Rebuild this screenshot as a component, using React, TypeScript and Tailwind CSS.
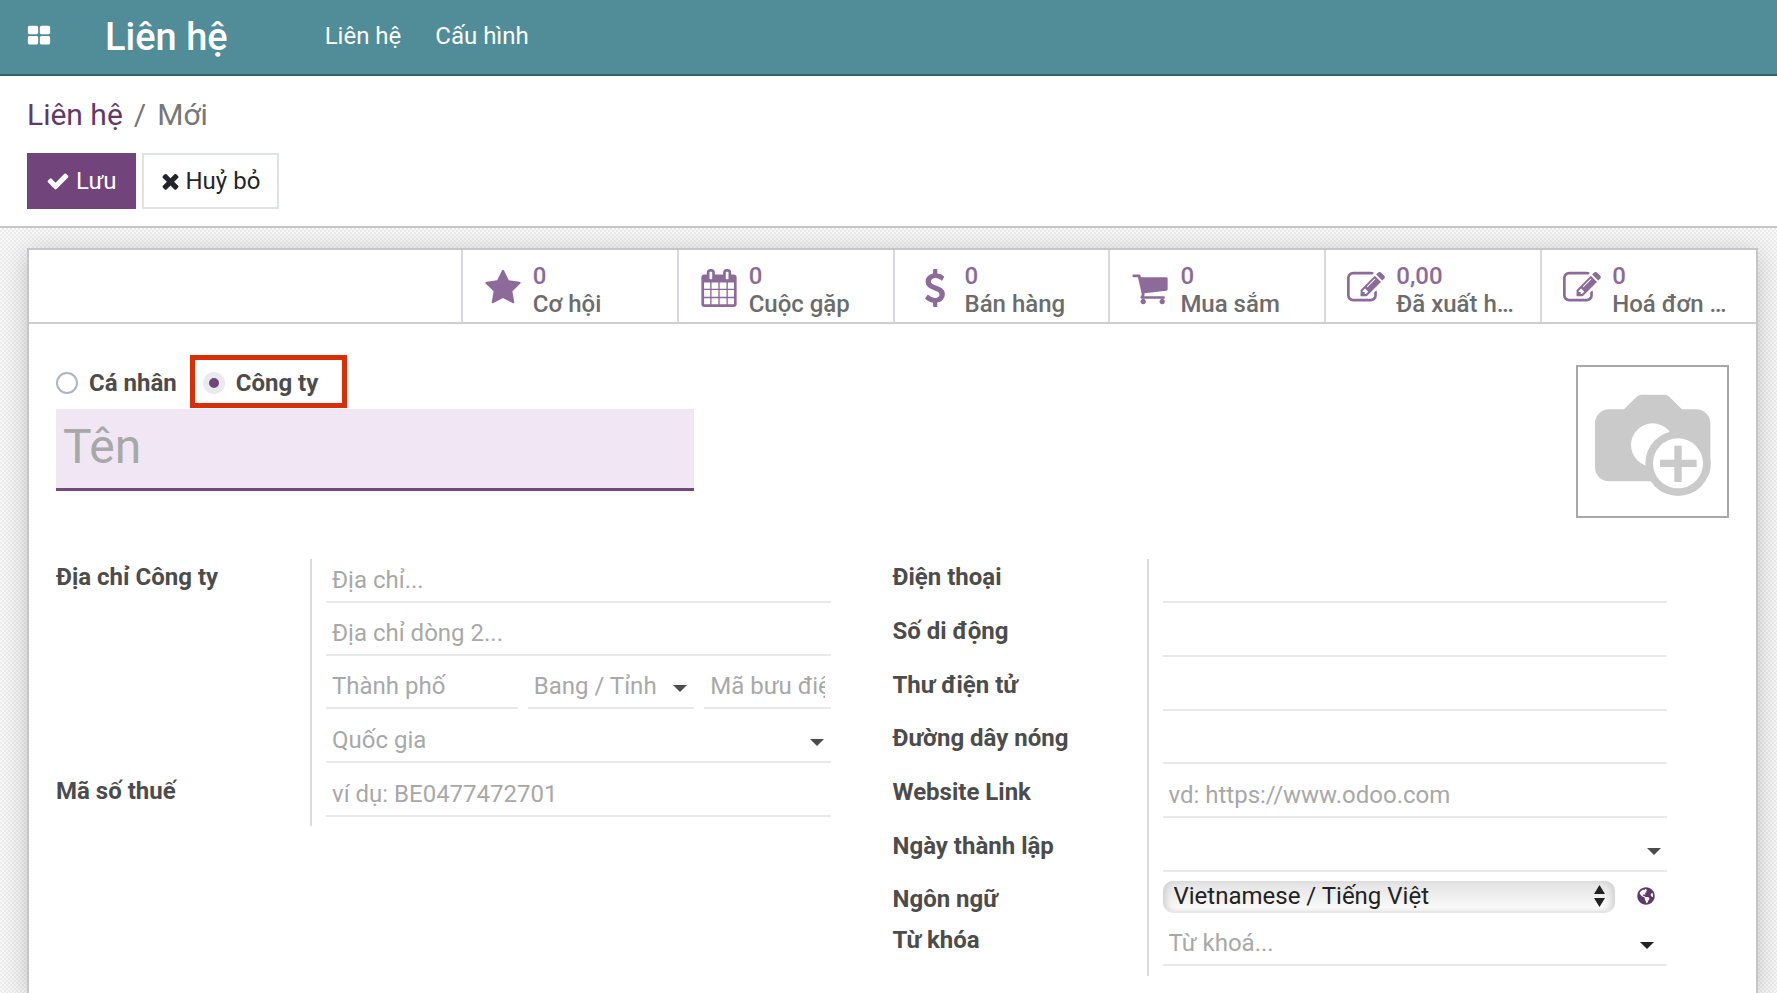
import React from 'react';
import { FaGlobeAmericas } from 'react-icons/fa';
import clsx from 'clsx';

const icons = {
  apps: 'M832 1024v384q0 52-38 90t-90 38h-512q-52 0-90-38t-38-90v-384q0-52 38-90t90-38h512q52 0 90 38t38 90zm0-768v384q0 52-38 90t-90 38h-512q-52 0-90-38t-38-90v-384q0-52 38-90t90-38h512q52 0 90 38t38 90zm896 768v384q0 52-38 90t-90 38h-512q-52 0-90-38t-38-90v-384q0-52 38-90t90-38h512q52 0 90 38t38 90zm0-768v384q0 52-38 90t-90 38h-512q-52 0-90-38t-38-90v-384q0-52 38-90t90-38h512q52 0 90 38t38 90z',
  check: 'M1671 566q0 40-28 68l-724 724-136 136q-28 28-68 28t-68-28l-136-136-362-362q-28-28-28-68t28-68l136-136q28-28 68-28t68 28l294 295 656-657q28-28 68-28t68 28l136 136q28 28 28 68z',
  times: 'M1490 1322q0 40-28 68l-136 136q-28 28-68 28t-68-28l-294-294-294 294q-28 28-68 28t-68-28l-136-136q-28-28-28-68t28-68l294-294-294-294q-28-28-28-68t28-68l136-136q28-28 68-28t68 28l294 294 294-294q28-28 68-28t68 28l136 136q28 28 28 68t-28 68l-294 294 294 294q28 28 28 68z',
  star: 'M1728 647q0 22-26 48l-363 354 86 500q1 7 1 20 0 21-10.5 35.5t-30.5 14.5q-19 0-40-12l-449-236-449 236q-22 12-40 12-21 0-31.5-14.5t-10.5-35.5q0-6 2-20l86-500-364-354q-25-27-25-48 0-37 56-46l502-73 225-455q19-41 49-41t49 41l225 455 502 73q56 9 56 46z',
  calendar: 'M192 1664h288v-288h-288v288zm352 0h320v-288h-320v288zm-352-352h288v-320h-288v320zm352 0h320v-320h-320v320zm-352-384h288v-288h-288v288zm736 736h320v-288h-320v288zm-384-736h320v-288h-320v288zm768 736h288v-288h-288v288zm-384-352h320v-320h-320v320zm-352-864v-288q0-13-9.5-22.5t-22.5-9.5h-64q-13 0-22.5 9.5t-9.5 22.5v288q0 13 9.500 22.500t22.500 9.500h64q13 0 22.500-9.500t9.500-22.500zm736 864h288v-320h-288v320zm-384-384h320v-288h-320v288zm384 0h288v-288h-288v288zm32-480v-288q0-13-9.500-22.500t-22.500-9.500h-64q-13 0-22.500 9.500t-9.500 22.500v288q0 13 9.500 22.500t22.500 9.500h64q13 0 22.500-9.500t9.500-22.500zm384-64v1280q0 52-38 90t-90 38h-1408q-52 0-90-38t-38-90v-1280q0-52 38-90t90-38h128v-96q0-66 47-113t113-47h64q66 0 113 47t47 113v96h384v-96q0-66 47-113t113-47h64q66 0 113 47t47 113v96h128q52 0 90 38t38 90z',
  dollar: 'M1362 1185q0 153-99.5 263.5t-258.5 136.5v175q0 14-9 23t-23 9h-135q-13 0-22.5-9.5t-9.5-22.5v-175q-66-9-127.5-31t-101.5-44.5-74-48-46.5-37.5-17.5-18q-17-21-2-41l103-135q7-10 23-12 15-2 24 9l2 2q113 99 243 125 37 8 74 8 81 0 142.5-43t61.5-122q0-28-15-53t-33.5-42-58.5-37.5-66-32-80-32.5q-39-16-61.5-25t-61.5-26.5-62.5-31-56.5-35.5-53.5-42.5-43.5-49-35.5-58-21-66.5-8.5-78q0-138 98-242t255-134v-180q0-13 9.5-22.5t22.5-9.5h135q14 0 23 9t9 23v176q57 6 110.5 23t87 33.5 63.5 37.5 39 29 15 14q17 18 5 38l-81 146q-8 15-23 16-14 3-27-7-3-3-14.5-12t-39-26.5-58.5-32-74.5-26-85.5-11.5q-95 0-155 43t-60 111q0 26 8.5 48t29.5 41.5 39.5 33 56 31 60.5 27 70 27.5q53 20 81 31.5t76 35 75.5 42.5 62 50 53 63.5 31.5 76.5 13 94z',
  cart: 'M704 1536q0 52-38 90t-90 38-90-38-38-90 38-90 90-38 90 38 38 90zm896 0q0 52-38 90t-90 38-90-38-38-90 38-90 90-38 90 38 38 90zm128-1088v512q0 24-16.5 42.5t-40.5 21.5l-1044 122q13 60 13 70 0 16-24 64h920q26 0 45 19t19 45-19 45-45 19h-1024q-26 0-45-19t-19-45q0-11 8-31.5t16-36 21.5-40 15.5-29.5l-177-823h-204q-26 0-45-19t-19-45 19-45 45-19h256q16 0 28.5 6.5t19.5 15.5 13 24.5 8 26 5.5 29.5 4.5 26h1201q26 0 45 19t19 45z',
  edit: 'M888 1184l116-116-152-152-116 116v56h96v96h56zm440-720q-16-16-33 1l-350 350q-17 17-1 33t33-1l350-350q17-17 1-33zm80 594v190q0 119-84.5 203.5t-203.5 84.5h-832q-119 0-203.5-84.5t-84.5-203.5v-832q0-119 84.5-203.5t203.5-84.5h832q63 0 117 25 15 7 18 23 3 17-9 29l-49 49q-14 14-32 8-23-6-45-6h-832q-66 0-113 47t-47 113v832q0 66 47 113t113 47h832q66 0 113-47t47-113v-126q0-13 9-22l64-64q15-15 35-7t20 29zm-96-738l288 288-672 672h-288v-288zm444 132l-92 92-288-288 92-92q28-28 68-28t68 28l152 152q28 28 28 68t-28 68z',
};

type IconName = keyof typeof icons;

interface IconProps {
  name: IconName;
  className?: string;
  viewBox?: string;
}

function Icon({ name, className, viewBox = '0 0 1792 1792' }: IconProps) {
  return (
    <svg className={clsx('shrink-0', className)} viewBox={viewBox} fill="currentColor" aria-hidden="true">
      <path d={icons[name]} />
    </svg>
  );
}

function Caret({ className }: { className: string }) {
  return (
    <svg
      className={clsx('pointer-events-none absolute top-5 h-[7px] w-[14px]', className)}
      viewBox="0 0 14 7"
      fill="currentColor"
      aria-hidden="true"
    >
      <path d="M0 0h14L7 7z" />
    </svg>
  );
}

const stats: { icon: IconName; value: string; label: string }[] = [
  { icon: 'star', value: '0', label: 'Cơ hội' },
  { icon: 'calendar', value: '0', label: 'Cuộc gặp' },
  { icon: 'dollar', value: '0', label: 'Bán hàng' },
  { icon: 'cart', value: '0', label: 'Mua sắm' },
  { icon: 'edit', value: '0,00', label: 'Đã xuất hoá đơn' },
  { icon: 'edit', value: '0', label: 'Hoá đơn mua hàng' },
];

const fieldClass =
  'block h-11 w-full min-w-0 appearance-none rounded-none border-b-2 border-[#e8e9ea] bg-transparent px-[6px] placeholder:text-[#a8a8a8] focus:outline-none';

const radioClass =
  'size-[22px] shrink-0 appearance-none rounded-full border-2 border-[#adb5bd] bg-white checked:border-[6px] checked:border-[#e9e9ee] checked:bg-[#71447b]';

function Row({ id, label, children }: { id: string; label: string; children: React.ReactNode }) {
  return (
    <div className="flex">
      <label htmlFor={id} className="w-[254px] shrink-0 leading-9 font-bold text-[#4c4c4c]">
        {label}
      </label>
      <div className="min-w-0 flex-1 border-l-2 border-[#dcdcdc] pl-[14px]">{children}</div>
    </div>
  );
}

interface FieldProps {
  id: string;
  placeholder?: string;
  label?: string;
  compact?: boolean;
}

function Field({ id, placeholder, label, compact = false }: FieldProps) {
  return (
    <div className={compact ? 'h-[53px]' : 'h-[54px]'}>
      <input id={id} type="text" placeholder={placeholder} aria-label={label} className={fieldClass} />
    </div>
  );
}

function SelectField({ id, placeholder }: { id: string; placeholder: string }) {
  return (
    <div className="relative h-[54px]">
      <select id={id} aria-label={placeholder} className={clsx(fieldClass, 'text-[#a8a8a8]')}>
        <option>{placeholder}</option>
      </select>
      <Caret className="right-[7px] text-[#4c4c4c]" />
    </div>
  );
}

function Navbar() {
  return (
    <header className="flex h-[76px] items-center border-b-2 border-[#35616c] bg-[#518c99] pl-[27px] text-white">
      <button type="button" aria-label="Ứng dụng" className="pb-[2px]">
        <Icon name="apps" className="size-6" />
      </button>
      <a href="#" className="ml-[54px] text-[38px] leading-none font-medium">
        Liên hệ
      </a>
      <nav className="ml-[97px] flex gap-[34px] pb-[2px]">
        <a href="#">Liên hệ</a>
        <a href="#">Cấu hình</a>
      </nav>
    </header>
  );
}

function ControlPanel() {
  return (
    <div className="border-b-2 border-[#c6c6c6] bg-white px-[27px] pt-[17px] pb-[17px]">
      <ol className="flex text-[30px] leading-[44px]">
        <li>
          <a href="#" className="text-[#5f3a69]">
            Liên hệ
          </a>
        </li>
        <li className="text-[#777777] before:px-[11px] before:content-['/']">Mới</li>
      </ol>
      <div className="mt-4 flex gap-[6px]">
        <button
          type="button"
          className="flex h-14 items-center gap-[6px] border-2 border-[#71447b] bg-[#71447b] px-[17px] text-white"
        >
          <Icon name="check" className="size-6" />
          Lưu
        </button>
        <button
          type="button"
          className="flex h-14 items-center gap-[6px] border-2 border-[#dee2e2] bg-white px-[17px] text-[#212529]"
        >
          <Icon name="times" className="h-6 w-[19px]" viewBox="192 0 1408 1792" />
          Huỷ bỏ
        </button>
      </div>
    </div>
  );
}

function StatButtons() {
  return (
    <div className="flex justify-end border-b-2 border-[#cdced2]">
      {stats.map((stat) => (
        <button
          key={stat.label}
          type="button"
          className="flex h-[72px] w-1/8 items-center gap-[11px] border-l-2 border-[#d8d9de] pt-1 pr-6 pl-[21px] text-left font-medium"
        >
          <Icon name={stat.icon} className="size-[38px] text-[#8c6a99]" />
          <span className="min-w-0 pt-1 leading-7">
            <span className="block text-[#8c6a99]">{stat.value}</span>
            <span className="block truncate text-[#6c6c6c]">{stat.label}</span>
          </span>
        </button>
      ))}
    </div>
  );
}

function PhotoButton() {
  return (
    <button type="button" aria-label="Tải ảnh lên" className="mt-[10px] size-[153px] border-2 border-[#a8a8a8]">
      <svg viewBox="0 0 447 447" fill="#cacaca" aria-hidden="true">
        <rect x="51" y="127" width="346" height="216" rx="42" />
        <path d="M136 129l40-40q6-6 14-6h70q8 0 14 6l40 40z" />
        <circle cx="224" cy="234" r="65" fill="#fff" />
        <circle cx="300" cy="289" r="98" />
        <circle cx="300" cy="289" r="75" fill="#fff" />
        <path d="M289 236h22v42h45v22h-45v45h-22v-45h-43v-22h43z" />
      </svg>
    </button>
  );
}

function AddressGroup() {
  return (
    <div className="pr-[62px]">
      <Row id="street" label="Địa chỉ Công ty">
        <Field id="street" placeholder="Địa chỉ..." compact />
        <Field id="street2" placeholder="Địa chỉ dòng 2..." label="Địa chỉ dòng 2" compact />
        <div className="grid grid-cols-[38fr_33fr_25fr] gap-[10px]">
          <Field id="city" placeholder="Thành phố" label="Thành phố" />
          <SelectField id="state" placeholder="Bang / Tỉnh" />
          <Field id="zip" placeholder="Mã bưu điện" label="Mã bưu điện" />
        </div>
        <SelectField id="country" placeholder="Quốc gia" />
      </Row>
      <Row id="vat" label="Mã số thuế">
        <Field id="vat" placeholder="ví dụ: BE0477472701" compact />
      </Row>
    </div>
  );
}

function ContactGroup() {
  return (
    <div className="pr-[62px]">
      <Row id="phone" label="Điện thoại">
        <Field id="phone" />
      </Row>
      <Row id="mobile" label="Số di động">
        <Field id="mobile" />
      </Row>
      <Row id="email" label="Thư điện tử">
        <Field id="email" compact />
      </Row>
      <Row id="hotline" label="Đường dây nóng">
        <Field id="hotline" />
      </Row>
      <Row id="website" label="Website Link">
        <Field id="website" placeholder="vd: https://www.odoo.com" />
      </Row>
      <Row id="founded" label="Ngày thành lập">
        <div className="relative h-[53px]">
          <input id="founded" type="text" className={fieldClass} />
          <Caret className="right-[6px] text-[#4c4c4c]" />
        </div>
      </Row>
      <Row id="lang" label="Ngôn ngữ">
        <div className="flex h-[41px] items-start pr-3">
          <div className="relative flex-1">
            <select
              id="lang"
              defaultValue="vi"
              className="block h-8 w-full appearance-none rounded-[10px] border-b-2 border-[#e6e6e6] bg-linear-to-b from-[#e2e2e2] to-[#fcfcfc] px-[11px] leading-7 text-[#222222] shadow-[inset_6px_0_6px_-3px_#cfcfcf,inset_-6px_0_6px_-3px_#cfcfcf] focus:outline-none"
            >
              <option value="vi">Vietnamese / Tiếng Việt</option>
            </select>
            <svg
              className="pointer-events-none absolute top-1 right-[10px] h-[22px] w-[11px] text-[#222222]"
              viewBox="0 0 11 22"
              fill="currentColor"
              aria-hidden="true"
            >
              <path d="M0 9h11L5.5 0zM0 13h11l-5.5 9z" />
            </svg>
          </div>
          <button type="button" aria-label="Dịch" className="mt-[6px] ml-[22px] text-[#5f3a69]">
            <FaGlobeAmericas className="size-[18px]" />
          </button>
        </div>
      </Row>
      <Row id="tags" label="Từ khóa">
        <div className="relative h-[54px]">
          <input id="tags" type="text" placeholder="Từ khoá..." className={fieldClass} />
          <Caret className="right-[13px] text-[#222222]" />
        </div>
      </Row>
    </div>
  );
}

export default function App() {
  return (
    <div className="flex min-h-screen flex-col bg-white font-['Roboto',sans-serif] text-[24px] leading-9">
      <Navbar />
      <ControlPanel />
      <main className="flex flex-1 bg-[repeating-conic-gradient(#ebebeb_0_25%,#f8f8f8_0_50%)] bg-size-[4px_4px] pt-5 pr-[19px] pl-[27px]">
        <form className="min-w-0 flex-1 border-2 border-b-0 border-[#c6c6ca] bg-white shadow-[0_4px_24px_rgba(0,0,0,0.2)]">
          <StatButtons />
          <div className="px-[27px] pt-[31px]">
            <div className="flex items-start justify-between">
              <div>
                <div className="flex h-[54px] items-start font-bold text-[#4c4c4c]">
                  <label className="flex h-[53px] items-center gap-[11px] pt-[2px]">
                    <input type="radio" name="kind" className={radioClass} />
                    Cá nhân
                  </label>
                  <label className="ml-[13px] flex h-[53px] items-center gap-[11px] border-[5px] border-[#d92f08] pt-[2px] pr-6 pl-2">
                    <input type="radio" name="kind" defaultChecked className={radioClass} />
                    Công ty
                  </label>
                </div>
                <input
                  type="text"
                  aria-label="Tên"
                  placeholder="Tên"
                  className="block h-[82px] w-[638px] border-b-[3px] border-[#71497f] bg-[#f1e7f4] px-[7px] pb-1 text-[48px] placeholder:text-[#a8a8a8] focus:outline-none"
                />
              </div>
              <PhotoButton />
            </div>
            <div className="mt-[41px] grid grid-cols-2">
              <AddressGroup />
              <ContactGroup />
            </div>
          </div>
        </form>
      </main>
    </div>
  );
}
